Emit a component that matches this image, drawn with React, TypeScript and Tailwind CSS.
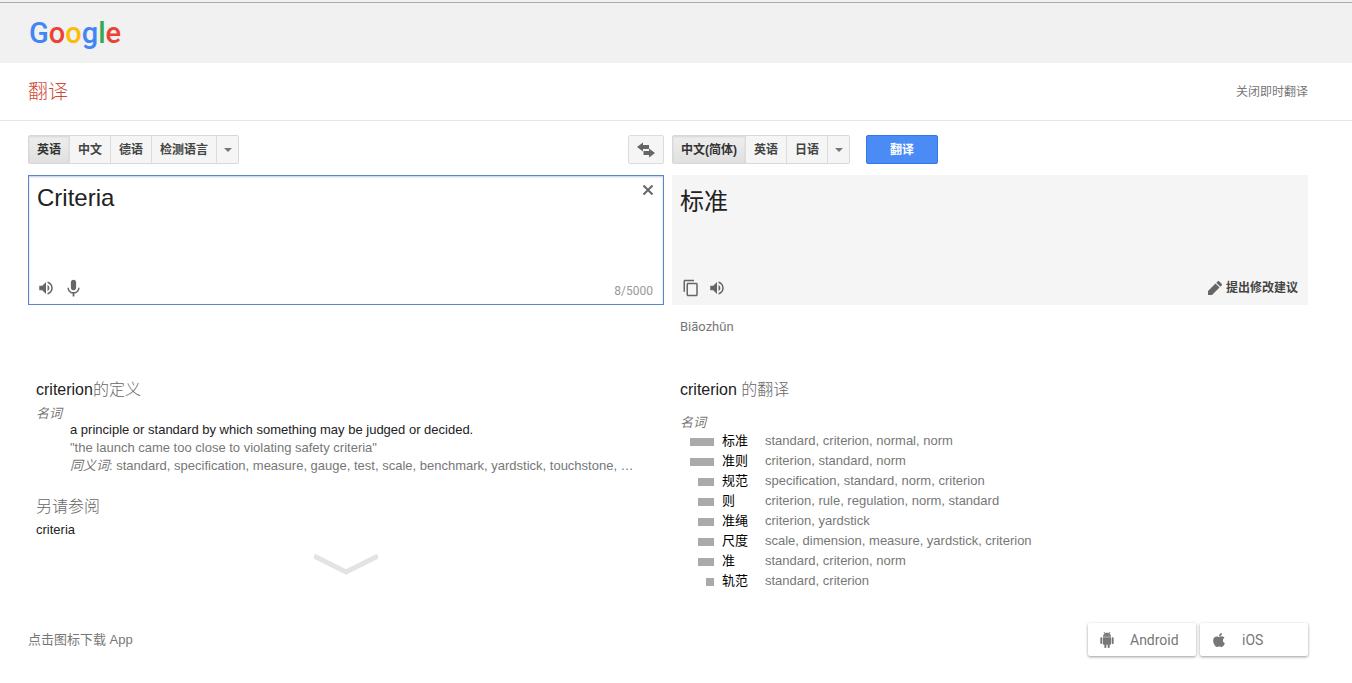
import React, { useState } from 'react';
import { MdVolumeUp, MdMic, MdContentCopy } from 'react-icons/md';
import { FaApple } from 'react-icons/fa';
import clsx from 'clsx';

const MAX_LENGTH = 5000;

const SOURCE_LANGS = ['英语', '中文', '德语', '检测语言'];
const TARGET_LANGS = ['中文(简体)', '英语', '日语'];

const TRANSLATIONS = [
  { word: '标准', frequency: 3, back: 'standard, criterion, normal, norm' },
  { word: '准则', frequency: 3, back: 'criterion, standard, norm' },
  { word: '规范', frequency: 2, back: 'specification, standard, norm, criterion' },
  { word: '则', frequency: 2, back: 'criterion, rule, regulation, norm, standard' },
  { word: '准绳', frequency: 2, back: 'criterion, yardstick' },
  { word: '尺度', frequency: 2, back: 'scale, dimension, measure, yardstick, criterion' },
  { word: '准', frequency: 2, back: 'standard, criterion, norm' },
  { word: '轨范', frequency: 1, back: 'standard, criterion' },
];

// ─── Logo ─────────────────────────────────────────────────────────────────
const Logo: React.FC = () => (
  <a href="#" aria-label="Google" className="font-['Roboto',sans-serif] text-[29px] leading-9 font-medium">
    <span className="text-[#4285f4]">G</span>
    <span className="text-[#ea4335]">o</span>
    <span className="text-[#fbbc05]">o</span>
    <span className="text-[#4285f4]">g</span>
    <span className="text-[#34a853]">l</span>
    <span className="text-[#ea4335]">e</span>
  </a>
);

// ─── Icons ────────────────────────────────────────────────────────────────
const SwapIcon: React.FC = () => (
  <svg width="18" height="16" viewBox="0 0 18 16" fill="#666" aria-hidden="true">
    <path d="M0 5 6 .5V3h6v4H6v2.500z" />
    <path d="M18 11l-6-4.500V9H6.500v4H12v2.500z" />
  </svg>
);

const ClearIcon: React.FC = () => (
  <svg width="16" height="16" viewBox="0 0 16 16" fill="none" stroke="currentColor" strokeWidth="2" aria-hidden="true">
    <path d="M3.500 3.500l9 9M12.500 3.500l-9 9" />
  </svg>
);

const PencilIcon: React.FC = () => (
  <svg width="14" height="14" viewBox="0 0 14 14" fill="#666" aria-hidden="true">
    <path d="M0 14v-4l7.500-7.500 4 4L4 14z" />
    <path d="M8.300 1.700 9.600.4c.5-.5 1.200-.5 1.700 0l2.300 2.300c.5.5.5 1.200 0 1.700l-1.300 1.300z" />
  </svg>
);

const AndroidIcon: React.FC = () => (
  <svg width="16" height="16" viewBox="0 0 24 24" fill="currentColor" aria-hidden="true">
    <path d="M6 18c0 .55.45 1 1 1h1v3.500c0 .83.67 1.500 1.500 1.500s1.500-.67 1.500-1.500V19h2v3.500c0 .83.67 1.500 1.500 1.500s1.500-.67 1.500-1.500V19h1c.55 0 1-.45 1-1V8H6v10z" />
    <path d="M3.500 8C2.670 8 2 8.670 2 9.500v7c0 .83.67 1.500 1.500 1.500S5 17.330 5 16.500v-7C5 8.670 4.330 8 3.500 8zm17 0c-.83 0-1.500.67-1.500 1.500v7c0 .83.67 1.500 1.500 1.500s1.500-.67 1.500-1.500v-7c0-.83-.67-1.500-1.500-1.500z" />
    <path d="M15.530 2.160l1.300-1.300c.2-.2.2-.51 0-.71-.2-.2-.51-.2-.71 0l-1.480 1.480C13.850 1.230 12.950 1 12 1c-.96 0-1.860.23-2.660.63L7.850.15c-.2-.2-.51-.2-.71 0-.2.2-.2.51 0 .71l1.310 1.310C6.970 3.260 6 5.010 6 7h12c0-1.990-.97-3.750-2.470-4.840zM10 5H9V4h1v1zm5 0h-1V4h1v1z" />
  </svg>
);

// ─── Language tabs ────────────────────────────────────────────────────────
interface LangTabsProps {
  label: string;
  langs: string[];
}

const LangTabs: React.FC<LangTabsProps> = ({ label, langs }) => {
  const [active, setActive] = useState(langs[0]);

  return (
    <div
      role="group"
      aria-label={label}
      className="flex h-[29px] divide-x divide-[#dcdcdc] rounded-xs border border-[#d8d8d8] bg-[#f5f5f5] text-xs font-bold text-[#444]"
    >
      {langs.map((lang) => (
        <button
          key={lang}
          type="button"
          aria-pressed={lang === active}
          onClick={() => setActive(lang)}
          className={clsx(
            'px-2 whitespace-nowrap',
            lang === active && 'bg-linear-to-b from-[#eeeeee] to-[#e0e0e0] text-[#333] shadow-[inset_0_1px_2px_rgba(0,0,0,0.1)]'
          )}
        >
          {lang}
        </button>
      ))}
      <button type="button" aria-label="更多语言" className="flex w-[21px] items-center justify-center">
        <span className="border-x-4 border-t-4 border-x-transparent border-t-[#777]" />
      </button>
    </div>
  );
};

// ─── Source and result panels ─────────────────────────────────────────────
const SourcePanel: React.FC = () => {
  const [text, setText] = useState('Criteria');

  return (
    <div className="flex h-[130px] flex-col border border-[#5b87c9] shadow-[inset_0_1px_2px_rgba(91,135,201,0.4)]">
      <div className="flex flex-1">
        <textarea
          aria-label="原文"
          maxLength={MAX_LENGTH}
          spellCheck={false}
          value={text}
          onChange={(e) => setText(e.target.value)}
          className="flex-1 resize-none px-2 py-1.5 text-2xl leading-8 text-[#222] outline-none"
        />
        <button type="button" aria-label="清除" onClick={() => setText('')} className="mt-1.5 mr-[7px] h-4 text-[#666]">
          <ClearIcon />
        </button>
      </div>
      <div className="flex h-8 items-center gap-2 pr-2.5 pl-2 text-[#666]">
        <button type="button" aria-label="朗读">
          <MdVolumeUp size={18} />
        </button>
        <button type="button" aria-label="语音输入">
          <MdMic size={21} />
        </button>
        <span className="ml-auto pt-1.5 font-['Roboto',sans-serif] text-xs text-[#999]">
          {text.length}/{MAX_LENGTH}
        </span>
      </div>
    </div>
  );
};

const ResultPanel: React.FC = () => (
  <div className="flex h-[130px] flex-col bg-[#f5f5f5]">
    <p className="flex-1 px-2 py-[9px] text-2xl leading-9 text-[#222]">标准</p>
    <div className="flex h-[35px] items-center gap-2 px-2.5 text-[#666]">
      <button type="button" aria-label="复制">
        <MdContentCopy size={18} />
      </button>
      <button type="button" aria-label="朗读">
        <MdVolumeUp size={18} />
      </button>
      <button type="button" className="ml-auto flex items-center gap-1 text-xs font-bold text-[#444]">
        <PencilIcon />
        提出修改建议
      </button>
    </div>
  </div>
);

// ─── Dictionary ───────────────────────────────────────────────────────────
const Definitions: React.FC = () => (
  <section className="px-2 text-[13px] leading-[18px]">
    <h2 className="text-base leading-6 font-light text-[#666]">
      <span className="text-[#222]">criterion</span>的定义
    </h2>
    <p className="mt-1 leading-[15px] text-[#777] italic">名词</p>
    <div className="pl-[34px] text-[#777]">
      <p className="text-[#222]">a principle or standard by which something may be judged or decided.</p>
      <p>"the launch came too close to violating safety criteria"</p>
      <p className="truncate">
        <i>同义词</i>: standard, specification, measure, gauge, test, scale, benchmark, yardstick, touchstone, …
      </p>
    </div>
    <h2 className="mt-5 text-base leading-6 font-light text-[#666]">另请参阅</h2>
    <p className="mt-0.5">
      <a href="#" className="text-[#222]">criteria</a>
    </p>
    <button type="button" aria-label="展开" className="mx-auto mt-3.5 block text-[#e3e3e3]">
      <svg width="64" height="22" viewBox="0 0 64 22" fill="none" stroke="currentColor" strokeWidth="5">
        <path d="M0 3 32 19 64 3" />
      </svg>
    </button>
  </section>
);

const Translations: React.FC = () => (
  <section className="px-2 text-[13px]">
    <h2 className="text-base leading-6 font-light text-[#666]">
      <span className="text-[#222]">criterion</span> 的翻译
    </h2>
    <p className="mt-3 leading-[17px] text-[#777] italic">名词</p>
    <table>
      <tbody>
        {TRANSLATIONS.map(({ word, frequency, back }) => (
          <tr key={word} className="h-5 leading-5">
            <td className="w-[34px] p-0">
              <div className="mt-0.5 ml-auto h-2 bg-[#aaa]" style={{ width: frequency * 8 }} />
            </td>
            <td className="w-[51px] p-0 pl-2 text-black">{word}</td>
            <td className="p-0 text-[#777]">{back}</td>
          </tr>
        ))}
      </tbody>
    </table>
  </section>
);

const STORE_LINK =
  "flex h-[33px] w-[108px] items-center gap-[15px] rounded-xs pl-[11px] font-['Roboto',sans-serif] text-sm text-[#777] shadow-[0_1px_3px_rgba(0,0,0,0.4)]";

export default function App() {
  return (
    <div className="min-h-screen bg-white font-['Liberation_Sans','Noto_Sans_CJK_SC',sans-serif] text-[#222]">
      <div className="h-0.5 bg-[#f1f1f1]" />
      <header className="flex h-[61px] items-center border-t border-[#aaa] bg-[#f1f1f1] px-[29px]">
        <Logo />
      </header>

      <div className="flex h-[58px] items-center justify-between border-b border-[#e5e5e5] pr-11 pl-7">
        <h1 className="text-xl font-light text-[#d14836]">翻译</h1>
        <a href="#" className="text-xs text-[#777]">关闭即时翻译</a>
      </div>

      <main className="grid grid-cols-2 gap-x-2 pt-3.5 pr-11 pl-7">
        <div className="flex items-center justify-between">
          <LangTabs label="源语言" langs={SOURCE_LANGS} />
          <button
            type="button"
            aria-label="交换语言"
            className="flex h-[29px] w-9 items-center justify-center rounded-xs border border-[#dcdcdc] bg-[#f5f5f5]"
          >
            <SwapIcon />
          </button>
        </div>
        <div className="flex items-center gap-4">
          <LangTabs label="目标语言" langs={TARGET_LANGS} />
          <button
            type="button"
            className="h-[29px] w-[72px] rounded-xs border border-[#3079ed] bg-[#4a8bf5] text-xs font-bold text-white"
          >
            翻译
          </button>
        </div>

        <div className="mt-[11px]">
          <SourcePanel />
        </div>
        <div className="mt-[11px]">
          <ResultPanel />
          <p className="mt-3 mb-[41px] px-2 font-['Roboto',sans-serif] text-[13px] leading-5 text-[#777]">Biāozhǔn</p>
        </div>

        <Definitions />
        <Translations />
      </main>

      <footer className="flex items-center justify-between pt-8 pr-11 pb-6 pl-7">
        <p className="text-[13px] text-[#777]">点击图标下载 App</p>
        <div className="flex gap-1">
          <a href="#" className={STORE_LINK}>
            <AndroidIcon />
            Android
          </a>
          <a href="#" className={STORE_LINK}>
            <FaApple size={16} />
            iOS
          </a>
        </div>
      </footer>
    </div>
  );
}
